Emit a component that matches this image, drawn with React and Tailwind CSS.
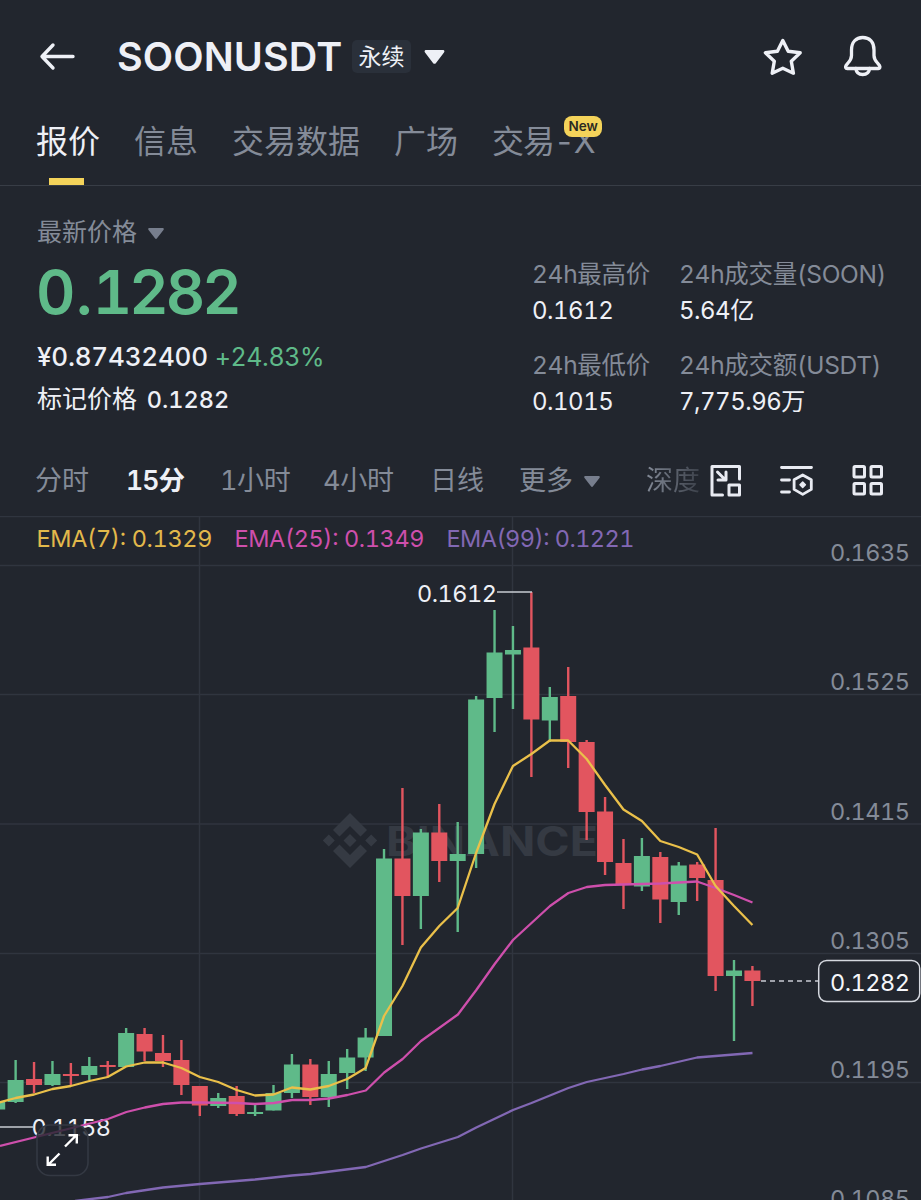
const tabs = ['报价', '信息', '交易数据', '广场', '交易-X']

const stats = [
  { label: '24h最高价', value: '0.1612' },
  { label: '24h成交量(SOON)', value: '5.64亿' },
  { label: '24h最低价', value: '0.1015' },
  { label: '24h成交额(USDT)', value: '7,775.96万' },
]

const axis = [
  ['0.1635', 560.5],
  ['0.1525', 690],
  ['0.1415', 819.5],
  ['0.1305', 949],
  ['0.1195', 1078],
  ['0.1085', 1206.5],
]

// [wick top, body top, body bottom, wick bottom, rising]
const candles = [
  [1102, 1102, 1109.5, 1109.5, 1],
  [1060, 1080, 1102, 1103, 1],
  [1062, 1079, 1085, 1093, 0],
  [1061, 1074, 1085, 1086, 1],
  [1063, 1074, 1076, 1085, 0],
  [1057, 1066, 1075, 1080, 1],
  [1061, 1065, 1067, 1077, 0],
  [1028, 1033, 1067, 1067, 1],
  [1028, 1034, 1051.5, 1061, 0],
  [1035, 1053, 1061, 1067, 0],
  [1040, 1060, 1085, 1095, 0],
  [1086, 1086, 1105.5, 1116, 0],
  [1093, 1098, 1106, 1108, 1],
  [1086, 1096, 1114, 1116, 0],
  [1105, 1112, 1114, 1116, 1],
  [1085, 1093, 1110.5, 1110.5, 1],
  [1054, 1064.5, 1093, 1098, 1],
  [1059, 1064.5, 1097, 1105, 0],
  [1061, 1074, 1097, 1107, 1],
  [1049, 1057.5, 1073, 1089, 1],
  [1028, 1037.5, 1057.5, 1071, 1],
  [849, 858.5, 1036, 1036, 1],
  [788, 858.5, 896, 945, 0],
  [829, 832.5, 896, 929, 1],
  [804, 832.5, 861, 882, 0],
  [822, 854, 861, 932, 1],
  [696, 699.5, 854, 868, 1],
  [610, 652.5, 698, 732, 1],
  [626, 650, 654.5, 709, 1],
  [592, 647.5, 719.5, 777, 0],
  [687, 697, 720.5, 742, 1],
  [667, 696, 742, 768, 0],
  [740, 742, 812, 840, 0],
  [797, 811.5, 862, 875, 0],
  [839, 863, 885, 909, 0],
  [838, 856, 886.5, 891, 1],
  [852, 857, 899.5, 923, 0],
  [862, 865.5, 902, 915, 1],
  [862, 864.5, 878, 901, 0],
  [828, 880, 976, 991, 0],
  [960, 970.5, 976, 1041, 1],
  [966, 970.5, 981, 1006, 0],
]

const candleX = (i) => -2.8 + i * 18.42

const ema7 = [
  1103, 1098, 1094.5, 1089, 1086, 1081, 1077, 1066.5, 1062.5, 1062.5, 1068, 1077, 1082, 1090,
  1095.5, 1094.5, 1087.5, 1089.5, 1086, 1079, 1068, 1016, 986, 947.5, 926, 908, 853, 804, 766, 754,
  740.5, 740.5, 759, 785, 809.5, 821, 841, 847, 854.5, 886, 906, 925,
]
const ema7Points = ema7.map((y, i) => `${candleX(i)},${y}`).join(' ')
const ema25Points =
  '0,1146 36,1137 80,1126 108,1119 126.4,1112 144.8,1107.5 163,1104 181.6,1102.5 200,1102.5 237,1103 255,1104 274,1103 292,1100 310.6,1100 329,1098.5 347.4,1095 365.8,1090.5 384.2,1072.5 402.6,1059 421,1041 457.9,1014.5 476.3,990 494.7,964 513,940 531.5,923 550,906 568.4,893 586.8,887 605,885 623.6,884.5 660.4,883.5 697,881.5 715.7,888 734,895 752.5,902.5'
const ema99Points =
  '75,1201 108,1197 126,1193 163,1187.5 200,1184 255,1179.5 292,1175.5 310.6,1174 365.8,1167 402.6,1155 421,1148.5 457.9,1137 476.3,1127.5 513,1110 531.5,1103 568.4,1088 586.8,1082 623.6,1074 642,1069.5 660.4,1066 697,1057.5 734,1054.5 752.5,1053'

function Caret({ className }) {
  return (
    <svg viewBox="0 0 20 14" className={className} fill="currentColor">
      <path d="M1.6 0h16.8c1.4 0 2 1.4 1.1 2.4l-8.2 10.8c-.7.9-1.9.9-2.6 0L.5 2.4C-.4 1.4.2 0 1.6 0z" />
    </svg>
  )
}

function Header() {
  return (
    <header className="flex h-[113px] items-center pl-[39px] pr-[38px]">
      <svg viewBox="0 0 37 30" className="h-[30px] w-[37px]" fill="none" stroke="currentColor" strokeWidth="3.4" strokeLinecap="round" strokeLinejoin="round">
        <path d="M34 14.500H3M14 3L3 14.500l11 11.500" />
      </svg>
      <h1 className="ml-[41px] w-[235px] whitespace-nowrap pt-[3px] text-[39.5px] font-semibold tracking-[0.1px]">SOONUSDT</h1>
      <span className="flex h-[33px] w-[59px] items-center justify-center rounded-[5px] bg-[#2a303a] pt-0.5 text-[23px]">永续</span>
      <Caret className="ml-[13px] h-[14px] w-[21px]" />
      <svg viewBox="0 0 40 40" className="ml-auto h-10 w-10" fill="none" stroke="currentColor" strokeWidth="3.4" strokeLinejoin="round">
        <path d="M19.8 3.6l5.4 10.6 12 1.6-8.9 8.4 2.1 12-10.6-5-10.6 5 2.1-12-8.900-8.400 12-1.600z" />
      </svg>
      <svg viewBox="0 0 40 44" className="mb-0.5 ml-10 h-11 w-10" fill="none" stroke="currentColor" strokeWidth="3.3" strokeLinecap="round" strokeLinejoin="round">
        <path d="M8.5 16C8.5 8 13 3.5 19.7 3.5S31 8 31 16v5.5c0 3 1.2 5 3.5 7.5l2 2.6c.9 1.6.4 2.9-1.2 2.9H4.200c-1.6 0-2.100-1.300-1.200-2.900l2-2.600c2.300-2.500 3.500-4.500 3.500-7.500z" />
        <path d="M12.8 34.5c.5 4 3.2 6 6.9 6s6.4-2 6.9-6" />
      </svg>
    </header>
  )
}

function Tabs() {
  return (
    <nav className="flex h-[73px] gap-[34px] border-b border-[#383d46] pl-[35px] text-[32px] text-[#848b98]">
      {tabs.map((tab, i) => (
        <div key={tab} className={i === 0 ? 'text-[#eef0f6]' : 'relative'}>
          <p className={tab === '交易-X' ? 'h-14 whitespace-nowrap pl-px leading-[57px] tracking-[-1px]' : 'h-14 whitespace-nowrap pl-px leading-[57px] -mr-px'}>
            {tab}
          </p>
          {i === 0 && <div className="ml-[14px] mt-[9px] h-[7px] w-[35px] bg-[#f4d35a]" />}
          {tab === '交易-X' && (
            <span className="absolute left-[73px] top-[3px] flex h-[21px] w-[38px] items-center justify-center rounded-[8px] bg-[#f4d35a] text-[13.5px] font-semibold text-[#2b2a22]">
              New
            </span>
          )}
        </div>
      ))}
    </nav>
  )
}

function Summary() {
  return (
    <section className="flex h-[260px] pl-[37px] pt-7">
      <div className="w-[495px] whitespace-nowrap">
        <div className="flex h-9 items-center pt-0.5 text-[25px] text-[#848b98]">
          最新价格
          <Caret className="ml-[11px] h-[11px] w-4 text-[#777e8d]" />
        </div>
        <p className="h-[84px] text-[61px] font-semibold leading-[84px] tracking-[-3px] text-[#5fba89]">
          <span className="-ml-px">0</span>
          <span className="mx-[3.500px]">.</span>1282
        </p>
        <p className="h-11 text-[26px] font-medium leading-[45px] tracking-[-0.2px]">
          ¥0.87432400 <span className="text-[25px] font-normal tracking-[-0.4px] text-[#5fba89]">+24.83%</span>
        </p>
        <p className="h-[43px] text-[25px] leading-[43px]">
          标记价格 <span className="ml-[3px] text-[23.5px] font-medium">0.1282</span>
        </p>
      </div>
      <div className="mt-[42px] grid h-[163px] grid-cols-[147px_1fr] content-between whitespace-nowrap">
        {stats.map((s) => (
          <div key={s.label}>
            <p className="h-9 text-[24.5px] leading-9 tracking-[-0.3px] text-[#848b98]">{s.label}</p>
            <p className="h-9 text-[24px] leading-[38px] tracking-[-0.5px]">{s.value}</p>
          </div>
        ))}
      </div>
    </section>
  )
}

function Timeframes() {
  return (
    <div className="flex h-[70px] items-center whitespace-nowrap pl-[35px] text-[27px] text-[#848b98]">
      <span className="w-[91px]">分时</span>
      <span className="w-[94px] text-[26.5px] font-semibold tracking-[-0.9px] text-[#eef0f6]">15分</span>
      <span className="w-[103px] tracking-[-0.4px]">1小时</span>
      <span className="w-[107px] tracking-[-0.3px]">4小时</span>
      <span className="w-[89px]">日线</span>
      <span className="flex w-[127px] items-center">
        更多
        <Caret className="ml-[11px] h-[11px] w-4 text-[#777e8d]" />
      </span>
      <span className="w-[63px] bg-linear-to-r from-[#848b98] to-[#22262e] to-120% bg-clip-text text-transparent">深度</span>
      <div className="mb-0.5 flex gap-[38px] text-[#e9ebf2]">
        <svg viewBox="0 0 33 33" className="h-[33px] w-[33px]" fill="none" stroke="currentColor" strokeWidth="3" strokeLinejoin="round" strokeLinecap="round">
          <path d="M13.5 31H3V2.5h27.5v12.5" />
          <path d="M20 21h10.500v10h-10.500zM8.500 8l7.500 7.500M17 8V16H9" />
        </svg>
        <svg viewBox="0 0 33 33" className="h-[33px] w-[33px]" fill="none" stroke="currentColor" strokeWidth="2.8" strokeLinejoin="round" strokeLinecap="round">
          <path d="M1.500 3.500H31.500M1.500 16H9.500M1.500 28H9.500M22.700 11l8.600 4.800v9.600l-8.600 5-8.600-5v-9.600z" />
          <path d="M22.700 18l2.700 2.700-2.700 2.700-2.700-2.700z" fill="currentColor" strokeWidth="1.500" />
        </svg>
        <svg viewBox="0 0 33 33" className="h-[33px] w-[33px]" fill="none" stroke="currentColor" strokeWidth="3" strokeLinejoin="round">
          <rect x="3" y="2.500" width="10.500" height="10.500" rx="1" />
          <rect x="20" y="2.500" width="10.500" height="10.500" rx="1" />
          <rect x="3" y="19.500" width="10.500" height="10.500" rx="1" />
          <rect x="20" y="19.500" width="10.500" height="10.500" rx="1" />
        </svg>
      </div>
    </div>
  )
}

function Chart() {
  return (
    <svg viewBox="0 516 921 684" className="block h-[684px] w-[921px]" fontSize="23.5">
      <g stroke="#30353f" strokeWidth="1.500">
        {[516.5, 565.5, 694.5, 824, 953.5, 1082.5].map((y) => (
          <line key={y} x1="0" x2="921" y1={y} y2={y} />
        ))}
        <line x1="199.500" x2="199.500" y1="516" y2="1200" />
        <line x1="512.500" x2="512.500" y1="516" y2="1200" />
      </g>

      {/* watermark */}
      <g fill="#353a43">
        <path d="M350 813l17 17-6.500 6.500L350 826l-10.500 10.500L333 830zM350 868l17-17-6.500-6.500L350 855l-10.500-10.500L333 851z" />
        <path d="M350 834l6.500 6.500L350 847l-6.500-6.500zM328.800 834.500l6 6-6 6-6-6zM371.200 834.500l6 6-6 6-6-6z" />
        <text x="386" y="855.500" fontSize="41" fontWeight="700" textLength="212" lengthAdjust="spacingAndGlyphs">BINANCE</text>
      </g>

      {candles.map(([high, top, bottom, low, up], i) => (
        <g key={i} fill={up ? '#5fba89' : '#e2555f'}>
          <rect x={candleX(i) - 1.2} y={high} width="2.400" height={low - high} />
          <rect x={candleX(i) - 8} y={top} width="16" height={bottom - top} />
        </g>
      ))}

      <g stroke="#c9ccd3" strokeWidth="1.500">
        <line x1="497" x2="532" y1="592" y2="592" />
        <line x1="0" x2="33" y1="1127" y2="1127" />
        <line x1="761" x2="818" y1="981" y2="981" strokeDasharray="5 4" strokeWidth="1.300" />
      </g>
      <g fill="#eef0f6">
        <text x="417" y="601.500" textLength="80">0.1612</text>
        <text x="31.500" y="1136" textLength="79.500">0.1158</text>
      </g>

      <g fill="none" strokeWidth="2.300" strokeLinejoin="round">
        <polyline points={ema99Points} stroke="#8268b4" />
        <polyline points={ema25Points} stroke="#ce4fac" />
        <polyline points={ema7Points} stroke="#eac04a" />
      </g>

      <text x="36.500" y="547" fill="#e2b94b" textLength="176">EMA(7): 0.1329</text>
      <text x="234.500" y="547" fill="#ce4fac" textLength="190">EMA(25): 0.1349</text>
      <text x="446.500" y="547" fill="#8268b4" textLength="188">EMA(99): 0.1221</text>

      <g fill="#848b98">
        {axis.map(([label, y]) => (
          <text key={label} x="830" y={y} textLength="80">{label}</text>
        ))}
      </g>
      <rect x="818.700" y="960.500" width="101" height="41" rx="8" fill="#22262e" stroke="#d5d8df" strokeWidth="1.500" />
      <text x="830" y="991" fill="#f5f6fa" textLength="80">0.1282</text>

      {/* fullscreen toggle */}
      <rect x="37" y="1125" width="51" height="50.500" rx="13" fill="#22262e" fillOpacity="0.8" stroke="#343943" strokeWidth="1.600" />
      <path d="M65 1146.500l11.500-11.500M68.500 1135.200h8.300v8.300M59.500 1153.500L48 1165M56 1164.800h-8.300v-8.300" fill="none" stroke="#fff" strokeWidth="2.400" />
    </svg>
  )
}

export default function App() {
  return (
    <main className="h-[1200px] w-[921px] overflow-hidden bg-[#22262e] font-[Inter,'Noto_Sans_CJK_SC',sans-serif] tabular-nums text-[#eef0f6]">
      <Header />
      <Tabs />
      <Summary />
      <Timeframes />
      <Chart />
    </main>
  )
}
